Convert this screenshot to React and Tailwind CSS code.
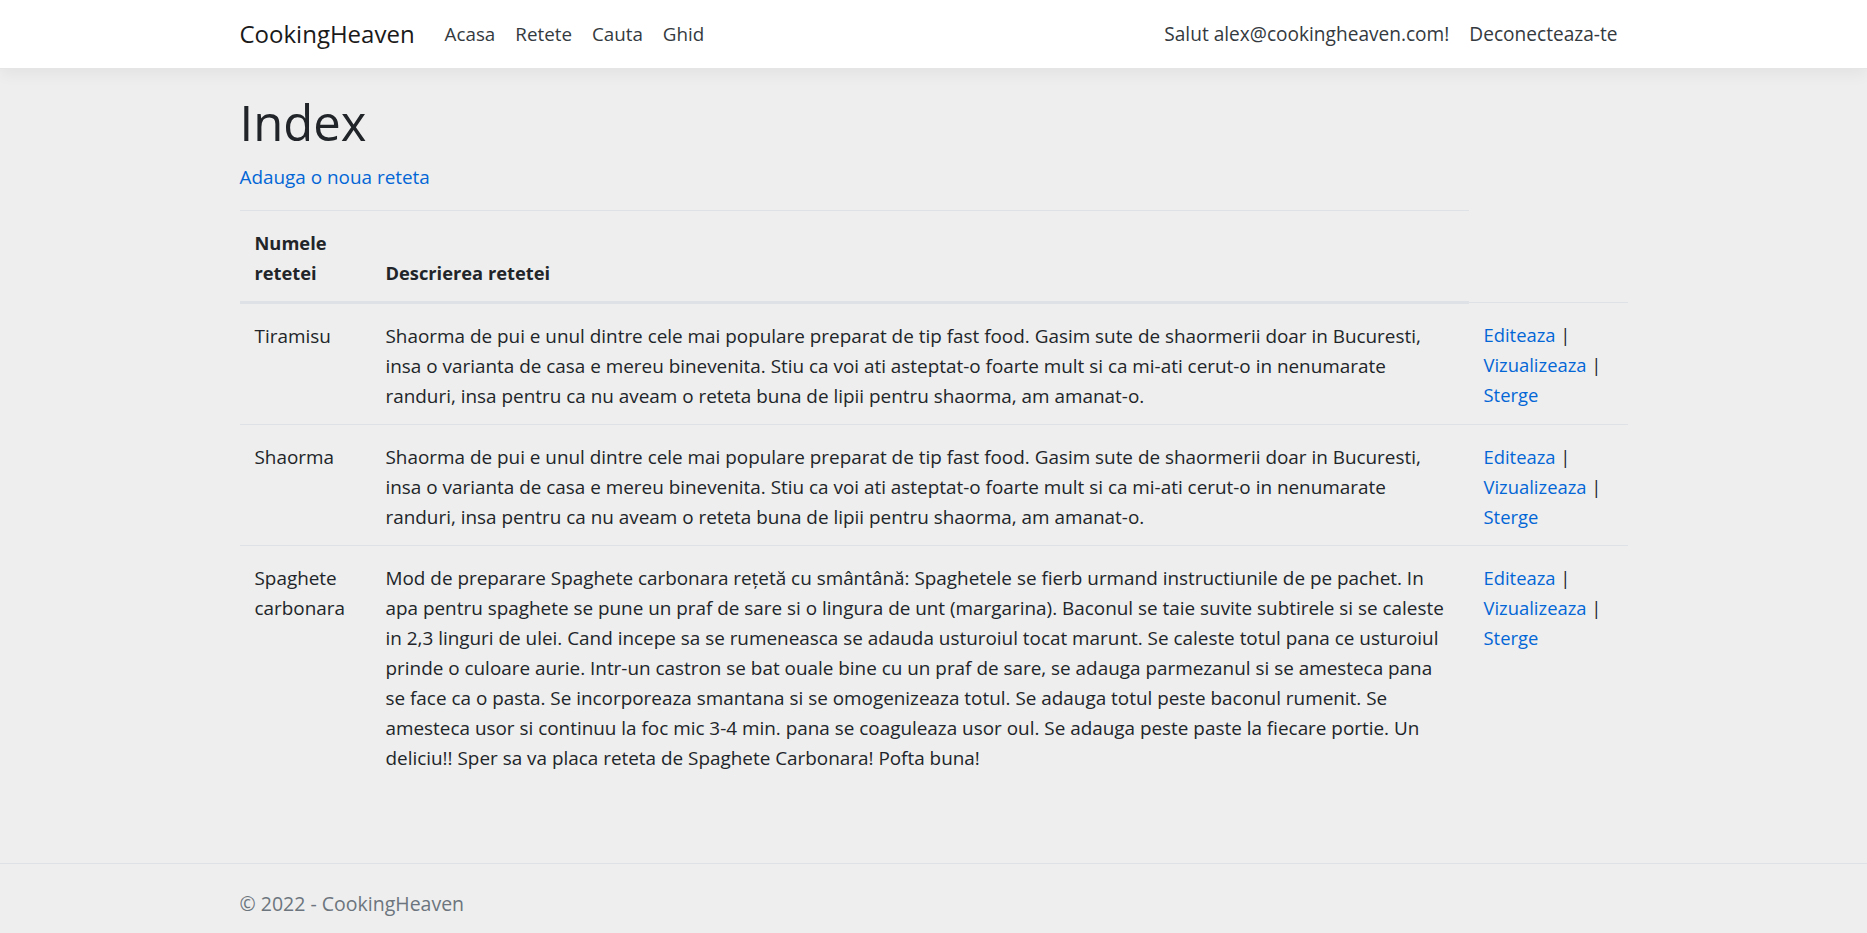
import React from "react";

const shaormaLines = [
  "Shaorma de pui e unul dintre cele mai populare preparat de tip fast food. Gasim sute de shaormerii doar in Bucuresti,",
  "insa o varianta de casa e mereu binevenita. Stiu ca voi ati asteptat-o foarte mult si ca mi-ati cerut-o in nenumarate",
  "randuri, insa pentru ca nu aveam o reteta buna de lipii pentru shaorma, am amanat-o.",
];

const spagheteLines = [
  "Mod de preparare Spaghete carbonara rețetă cu smântână: Spaghetele se fierb urmand instructiunile de pe pachet. In",
  "apa pentru spaghete se pune un praf de sare si o lingura de unt (margarina). Baconul se taie suvite subtirele si se caleste",
  "in 2,3 linguri de ulei. Cand incepe sa se rumeneasca se adauda usturoiul tocat marunt. Se caleste totul pana ce usturoiul",
  "prinde o culoare aurie. Intr-un castron se bat ouale bine cu un praf de sare, se adauga parmezanul si se amesteca pana",
  "se face ca o pasta. Se incorporeaza smantana si se omogenizeaza totul. Se adauga totul peste baconul rumenit. Se",
  "amesteca usor si continuu la foc mic 3-4 min. pana se coaguleaza usor oul. Se adauga peste paste la fiecare portie. Un",
  "deliciu!! Sper sa va placa reteta de Spaghete Carbonara! Pofta buna!",
];

const rows = [
  { name: ["Tiramisu"], lines: shaormaLines },
  { name: ["Shaorma"], lines: shaormaLines },
  { name: ["Spaghete", "carbonara"], lines: spagheteLines },
];

function Actions() {
  return (
    <div className="text-[18.4px]">
      <div>
        <a href="#" className="text-[#0366d6]">Editeaza</a> |
      </div>
      <div>
        <a href="#" className="text-[#0366d6]">Vizualizeaza</a> |
      </div>
      <div>
        <a href="#" className="text-[#0366d6]">Sterge</a>
      </div>
    </div>
  );
}

export default function App() {
  return (
    <div className="min-h-screen flex flex-col bg-[#eeeeee] text-[#212529] font-['Open_Sans',sans-serif] text-[18.9px] leading-[30px]">
      <header className="h-[69px] bg-white border-b border-[#e5e5e5] shadow-[0_5px_15px_rgba(0,0,0,0.05)] shrink-0">
        <div className="mx-auto w-[1388px] h-full flex items-center justify-between">
          <div className="flex items-center">
            <a href="#" className="text-[24px] leading-[36px] text-[#1a1a1a] mr-[20px]">CookingHeaven</a>
            <nav className="flex text-[18.8px]">
              {["Acasa", "Retete", "Cauta", "Ghid"].map((t) => (
                <a key={t} href="#" className="px-[10px] text-[#343a40]">{t}</a>
              ))}
            </nav>
          </div>
          <div className="flex items-center text-[19.1px]">
            <span className="px-[10px] text-[#343a40]">Salut alex@cookingheaven.com!</span>
            <a href="#" className="px-[10px] text-[#343a40]">Deconecteaza-te</a>
          </div>
        </div>
      </header>

      <main className="flex-1 mx-auto w-[1388px] pt-[21px] pb-[20px]">
        <h1 className="text-[49px] leading-[60px] font-medium pt-[2px] mb-[8px]">Index</h1>
        <p className="pt-[2px] mb-[18px]">
          <a href="#" className="text-[#0366d6]">Adauga o noua reteta</a>
        </p>
        <table className="w-full table-fixed border-collapse mb-[20px]">
          <colgroup>
            <col className="w-[131px]" />
            <col />
            <col className="w-[159px]" />
          </colgroup>
          <thead>
            <tr>
              <th className="px-[15px] pt-[17px] pb-[13px] text-left align-bottom font-bold text-[18.3px] border-t border-b-[3px] border-[#dee2e6]">
                Numele retetei
              </th>
              <th className="px-[15px] pt-[17px] pb-[13px] text-left align-bottom font-bold text-[18.3px] border-t border-b-[3px] border-[#dee2e6]">
                Descrierea retetei
              </th>
            </tr>
          </thead>
          <tbody>
            {rows.map((r, i) => (
              <tr key={i}>
                <td className="px-[15px] pt-[17px] pb-[13px] align-top border-t border-[#dee2e6]">
                  {r.name.map((n) => (
                    <div key={n}>{n}</div>
                  ))}
                </td>
                <td className="px-[15px] pt-[17px] pb-[13px] align-top border-t border-[#dee2e6]">
                  {r.lines.map((l, j) => (
                    <div key={j} className="whitespace-nowrap">{l}</div>
                  ))}
                </td>
                <td className="px-[15px] pt-[17px] pb-[13px] align-top border-t border-[#dee2e6]">
                  <Actions />
                </td>
              </tr>
            ))}
          </tbody>
        </table>
      </main>

      <footer className="h-[70px] border-t border-[#dee2e6] shrink-0">
        <div className="mx-auto w-[1388px] pt-[25px] text-[19.5px] text-[#6c757d]">© 2022 - CookingHeaven</div>
      </footer>
    </div>
  );
}
